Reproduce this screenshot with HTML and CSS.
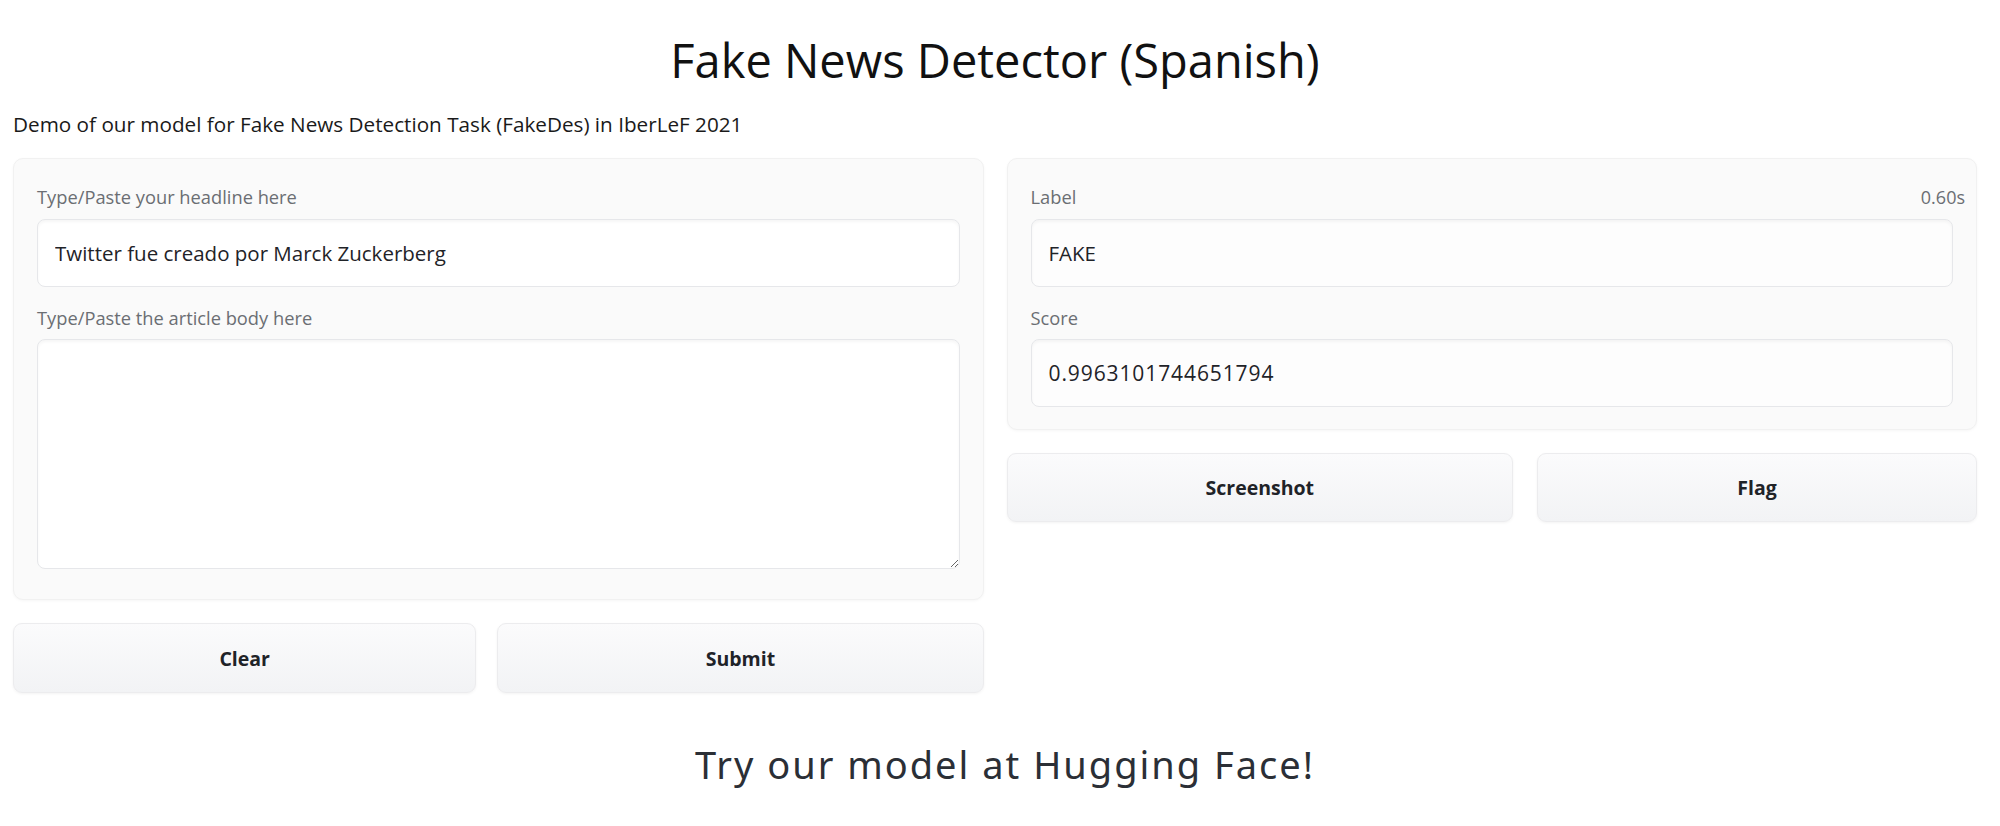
FILE: index.html
```html
<!DOCTYPE html>
<html lang="en">
<head>
<meta charset="utf-8">
<title>Fake News Detector (Spanish)</title>
<link rel="stylesheet" href="styles.css">
</head>
<body>
<div class="page">
  <h1 class="title">Fake News Detector (Spanish)</h1>
  <p class="desc">Demo of our model for Fake News Detection Task (FakeDes) in IberLeF 2021</p>
  <div class="columns">
    <div class="col col-left">
      <div class="panel panel-in">
        <div class="field-label">Type/Paste your headline here</div>
        <input class="text-input" type="text" value="Twitter fue creado por Marck Zuckerberg">
        <div class="field-label second">Type/Paste the article body here</div>
        <textarea class="text-area"></textarea>
      </div>
      <div class="btn-row">
        <button class="btn btn-clear">Clear</button>
        <button class="btn btn-submit">Submit</button>
      </div>
    </div>
    <div class="col col-right">
      <div class="panel panel-out">
        <div class="label-row">
          <div class="field-label">Label</div>
          <div class="timing">0.60s</div>
        </div>
        <div class="out-box">FAKE</div>
        <div class="field-label second">Score</div>
        <div class="out-box score">0.9963101744651794</div>
      </div>
      <div class="btn-row btn-row-right">
        <button class="btn btn-shot">Screenshot</button>
        <button class="btn btn-flag">Flag</button>
      </div>
    </div>
  </div>
  <div class="footer">Try our model at Hugging Face!</div>
</div>
</body>
</html>
```

FILE: styles.css
```css
* { box-sizing: border-box; }
html, body {
  margin: 0;
  padding: 0;
  background: #ffffff;
  font-family: "Open Sans", "Noto Sans", sans-serif;
  color: #1f2328;
}
.page {
  padding: 0 23px 0 13px;
}
.title {
  margin: 0;
  padding-top: 30px;
  height: 98px;
  text-align: center;
  font-weight: 400;
  font-size: 47px;
  line-height: 60px;
  color: #111111;
}
.desc {
  margin: 0;
  height: 60px;
  font-size: 20.7px;
  line-height: 52px;
  color: #1a1a1a;
}
.columns {
  display: flex;
  gap: 23px;
  align-items: flex-start;
}
.col {
  flex: 1 1 0;
  display: flex;
  flex-direction: column;
  gap: 23px;
}
.panel {
  background: #fafafa;
  border: 1px solid #f1f1f1;
  border-radius: 10px;
  box-shadow: 0 1px 3px rgba(0,0,0,0.04);
  padding: 23px 23px 22px 23px;
  display: flex;
  flex-direction: column;
}
.panel-in { padding-bottom: 30px; }
.field-label {
  font-size: 18.3px;
  line-height: 30px;
  color: #6b6e73;
  margin-bottom: 7px;
}
.field-label.second { margin-top: 16px; margin-bottom: 6px; }
.label-row {
  display: flex;
  justify-content: space-between;
  align-items: flex-start;
  margin-right: -12px;
}
.timing {
  font-size: 18px;
  line-height: 30px;
  color: #6b6e73;
}
.text-input, .text-area, .out-box {
  display: block;
  width: 100%;
  background: #ffffff;
  border: 1px solid #e6e7ea;
  border-radius: 8px;
  box-shadow: inset 0 2px 3px rgba(0,0,0,0.04);
  font-family: "Open Sans", "Noto Sans", sans-serif;
  font-size: 20.5px;
  color: #1f2328;
  outline: none;
  margin: 0;
}
.text-input {
  height: 68px;
  padding: 0 17px;
}
.text-area {
  height: 230px;
  padding: 16px 17px;
  resize: vertical;
}
.out-box {
  height: 68px;
  line-height: 66px;
  padding: 0 17px;
  background: #fdfdfd;
}
.out-box.score {
  font-size: 21px;
  letter-spacing: 0.9px;
}
.btn-row {
  display: flex;
  gap: 21px;
}
.btn-row-right { gap: 24px; }
.btn {
  height: 70px;
  border: 1px solid #ececee;
  border-radius: 9px;
  background: linear-gradient(#fbfbfc, #f2f3f5);
  box-shadow: 0 1px 3px rgba(0,0,0,0.05);
  font-family: "Open Sans", "Noto Sans", sans-serif;
  font-size: 19.5px;
  font-weight: 700;
  color: #1f2328;
  padding: 0;
}
.btn-clear { flex: 463 1 0; }
.btn-submit { flex: 486 1 0; }
.btn-shot { flex: 507 1 0; height: 69px; }
.btn-flag { flex: 440 1 0; height: 69px; }
.footer {
  margin-top: 46px;
  padding-left: 20px;
  text-align: center;
  font-family: "Noto Sans", "Open Sans", sans-serif;
  font-size: 38px;
  line-height: 50px;
  color: #2b2f36;
  letter-spacing: 2px;
}
```
